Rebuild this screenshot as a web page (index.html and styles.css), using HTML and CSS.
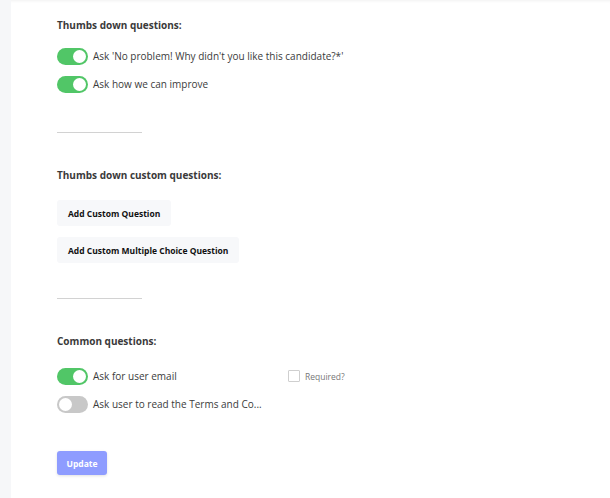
FILE: index.html
```html
<!DOCTYPE html>
<html>
<head>
<meta charset="utf-8">
<link rel="stylesheet" href="styles.css">
</head>
<body>
<div class="layout">
  <aside class="rail"></aside>
  <main class="panel">
    <h3 class="heading">Thumbs down questions:</h3>
    <div class="rows">
      <div class="row"><span class="toggle on"></span><span class="label">Ask 'No problem! Why didn't you like this candidate?*'</span></div>
      <div class="row"><span class="toggle on"></span><span class="label">Ask how we can improve</span></div>
    </div>
    <hr class="divider">
    <h3 class="heading">Thumbs down custom questions:</h3>
    <div class="buttons">
      <button class="btn-light">Add Custom Question</button>
      <button class="btn-light">Add Custom Multiple Choice Question</button>
    </div>
    <hr class="divider">
    <h3 class="heading">Common questions:</h3>
    <div class="rows common">
      <div class="row">
        <span class="toggle on"></span><span class="label wide">Ask for user email</span>
        <label class="req"><span class="check"></span><span>Required?</span></label>
      </div>
      <div class="row"><span class="toggle"></span><span class="label">Ask user to read the Terms and Co...</span></div>
    </div>
    <button class="btn-update">Update</button>
  </main>
</div>
</body>
</html>
```
FILE: styles.css
```css
* { box-sizing: border-box; }
html, body { margin: 0; padding: 0; background: #fff; }
body { font-family: "Open Sans", "Liberation Sans", sans-serif; color: #333; }
.layout { display: flex; min-height: 498px; }
.rail { width: 11px; flex: none; background: #f6f7f9; }
.panel {
  flex: 1;
  padding: 18px 0 0 46px;
  box-shadow: inset 0 3px 3px -2px rgba(0,0,0,0.06);
}
.heading {
  margin: 0;
  font-size: 10px;
  line-height: 15px;
  font-weight: 700;
  color: #3a3a3a;
}
.rows { display: flex; flex-direction: column; gap: 8px; margin-top: 13px; }
.rows.common { margin-top: 17px; }
.row { display: flex; align-items: center; height: 20px; }
.toggle {
  position: relative;
  width: 31px; height: 17px;
  border-radius: 9px;
  background: #c8c8c8;
  flex: none;
}
.toggle::after {
  content: "";
  position: absolute;
  top: 2px; left: 2px;
  width: 13px; height: 13px;
  border-radius: 50%;
  background: #fff;
}
.toggle.on { background: #51c667; }
.toggle.on::after { left: 16px; }
.label { margin-left: 5px; font-size: 10px; color: #3b3b3b; }
.label.wide { width: 195px; }
.req { display: flex; align-items: center; gap: 5px; font-size: 8.5px; color: #777; }
.check { width: 12px; height: 12px; border: 1px solid #cfcfcf; border-radius: 1px; background: #fff; }
.divider {
  width: 85px;
  margin: 38px 0 0;
  border: 0;
  border-top: 1px solid #d2d2d2;
}
.divider + .heading { margin-top: 35px; }
.buttons { display: flex; flex-direction: column; align-items: flex-start; gap: 11px; margin-top: 17px; }
.btn-light {
  height: 26px;
  padding: 0 11px;
  border: 0;
  border-radius: 3px;
  background: #f7f8fa;
  font-family: inherit;
  font-size: 8.5px;
  font-weight: 700;
  color: #111;
}
.buttons + .divider { margin-top: 35px; }
.btn-update {
  display: block;
  margin-top: 37px;
  height: 24px;
  width: 50px;
  padding: 0;
  border: 0;
  border-radius: 3px;
  background: #8e9cff;
  color: #fff;
  font-family: inherit;
  font-size: 8.5px;
  font-weight: 700;
  box-shadow: 0 1px 3px rgba(0,0,0,0.12);
}
```
